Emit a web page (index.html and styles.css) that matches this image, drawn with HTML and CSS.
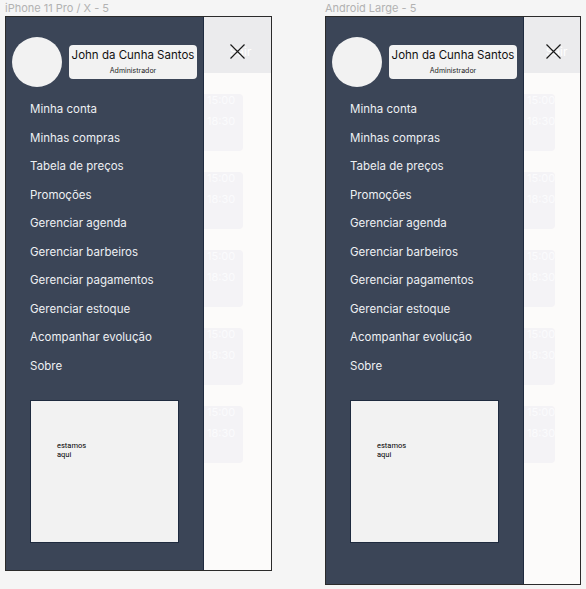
FILE: index.html
```html
<!DOCTYPE html>
<html lang="pt">
<head>
<meta charset="utf-8">
<title>Menu</title>
<link rel="stylesheet" href="styles.css">
</head>
<body>
  <section class="board">
    <div class="board-label">iPhone 11 Pro / X - 5</div>
    <div class="frame frame-iphone">
      <aside class="sidebar">
        <div class="profile">
          <div class="avatar"></div>
          <div class="namebox">
            <div class="name">John da Cunha Santos</div>
            <div class="role">Administrador</div>
          </div>
        </div>
        <ul class="menu">
          <li>Minha conta</li>
          <li>Minhas compras</li>
          <li>Tabela de preços</li>
          <li>Promoções</li>
          <li>Gerenciar agenda</li>
          <li>Gerenciar barbeiros</li>
          <li>Gerenciar pagamentos</li>
          <li>Gerenciar estoque</li>
          <li>Acompanhar evolução</li>
          <li>Sobre</li>
        </ul>
        <div class="map"><p>estamos<br>aqui</p></div>
      </aside>
      <main class="screen">
        <header class="topbar">
          <span class="sair">Sair</span>
          <svg class="close" width="15" height="15" viewBox="0 0 15 15"><path d="M0.5 0.5 L14.5 14.5 M14.5 0.5 L0.5 14.5" stroke="#1b1b1b" stroke-width="1.2" fill="none"/></svg>
        </header>
        <div class="cards">
          <div class="card"><span>15:00</span><span>18:30</span></div>
          <div class="card"><span>15:00</span><span>18:30</span></div>
          <div class="card"><span>15:00</span><span>18:30</span></div>
          <div class="card"><span>15:00</span><span>18:30</span></div>
          <div class="card"><span>15:00</span><span>18:30</span></div>
        </div>
      </main>
    </div>
  </section>

  <section class="board">
    <div class="board-label">Android Large - 5</div>
    <div class="frame frame-android">
      <aside class="sidebar">
        <div class="profile">
          <div class="avatar"></div>
          <div class="namebox">
            <div class="name">John da Cunha Santos</div>
            <div class="role">Administrador</div>
          </div>
        </div>
        <ul class="menu">
          <li>Minha conta</li>
          <li>Minhas compras</li>
          <li>Tabela de preços</li>
          <li>Promoções</li>
          <li>Gerenciar agenda</li>
          <li>Gerenciar barbeiros</li>
          <li>Gerenciar pagamentos</li>
          <li>Gerenciar estoque</li>
          <li>Acompanhar evolução</li>
          <li>Sobre</li>
        </ul>
        <div class="map"><p>estamos<br>aqui</p></div>
      </aside>
      <main class="screen">
        <header class="topbar">
          <span class="sair">Sair</span>
          <svg class="close" width="15" height="15" viewBox="0 0 15 15"><path d="M0.5 0.5 L14.5 14.5 M14.5 0.5 L0.5 14.5" stroke="#1b1b1b" stroke-width="1.2" fill="none"/></svg>
        </header>
        <div class="cards">
          <div class="card"><span>15:00</span><span>18:30</span></div>
          <div class="card"><span>15:00</span><span>18:30</span></div>
          <div class="card"><span>15:00</span><span>18:30</span></div>
          <div class="card"><span>15:00</span><span>18:30</span></div>
          <div class="card"><span>15:00</span><span>18:30</span></div>
        </div>
      </main>
    </div>
  </section>
</body>
</html>
```

FILE: styles.css
```css
* { box-sizing: border-box; }

html, body {
  margin: 0;
  padding: 0;
  background: #f5f5f5;
}

body {
  display: flex;
  align-items: flex-start;
  gap: 53px;
  padding-left: 5px;
  font-family: Inter, "Noto Sans", sans-serif;
}

.board {
  display: flex;
  flex-direction: column;
}

.board-label {
  height: 16px;
  line-height: 16px;
  font-size: 11px;
  color: #b2b2b2;
  white-space: nowrap;
}

.frame {
  display: flex;
  border: 1px solid #2b2b2b;
  overflow: hidden;
}

.frame-iphone { width: 267px; height: 555px; }
.frame-android { width: 256px; height: 569px; }

.sidebar {
  width: 198px;
  flex: none;
  background: #3b4557;
  border-right: 1px solid #1f2b3f;
  padding: 20px 0 0 6px;
}

.profile {
  display: flex;
  align-items: flex-start;
  gap: 7px;
}

.avatar {
  width: 50px;
  height: 50px;
  border-radius: 50%;
  background: #f2f2f2;
  flex: none;
}

.namebox {
  margin-top: 8px;
  width: 128px;
  height: 34px;
  border-radius: 4px;
  background: #f2f2f2;
  text-align: center;
  color: #111;
}

.name {
  font-size: 11.5px;
  line-height: 14px;
  padding-top: 3px;
  white-space: nowrap;
}

.role {
  font-size: 7px;
  line-height: 9px;
  margin-top: 4px;
  color: #222;
}

.menu {
  list-style: none;
  margin: 8px 0 0 0;
  padding: 0 0 0 18px;
}

.menu li {
  height: 28.5px;
  line-height: 28.5px;
  font-size: 11.5px;
  color: #eef0f3;
  white-space: nowrap;
}

.map {
  margin: 20px 0 0 18px;
  width: 149px;
  height: 143px;
  background: #f2f2f2;
  border: 1px solid #1f2b3f;
}

.map p {
  margin: 0;
  padding: 40px 0 0 26px;
  font-family: Roboto, "Liberation Sans", sans-serif;
  font-size: 7.5px;
  line-height: 9px;
  color: #000;
}

.screen {
  flex: 1;
  background: #fcfbfa;
  display: flex;
  flex-direction: column;
}

.topbar {
  position: relative;
  height: 56px;
  flex: none;
  background: #ebebed;
  display: flex;
  align-items: center;
  justify-content: center;
}

.sair {
  font-size: 12px;
  color: #ffffff;
  padding-top: 12px;
  padding-left: 6px;
}

.close {
  position: absolute;
  left: 50%;
  top: 27px;
  margin-left: -7.5px;
}

.cards {
  display: flex;
  flex-direction: column;
  gap: 21px;
  padding-top: 21px;
}

.card {
  height: 57px;
  margin-right: 28px;
  background: #f4f3f6;
  border-radius: 0 4px 4px 0;
  display: flex;
  flex-direction: column;
  gap: 9px;
  padding: 0 0 0 3px;
  font-size: 11px;
  line-height: 12px;
  color: #fbfbfd;
}
```
